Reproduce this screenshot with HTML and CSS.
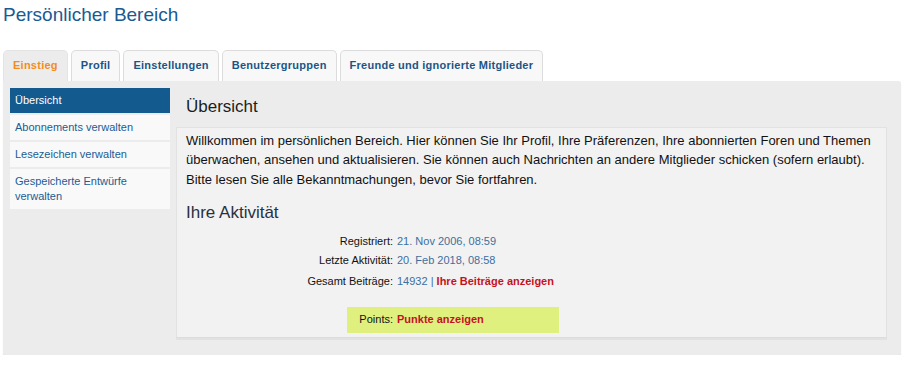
FILE: index.html
```html
<!DOCTYPE html>
<html lang="de">
<head>
<meta charset="utf-8">
<title>Persönlicher Bereich</title>
<link rel="stylesheet" href="styles.css">
</head>
<body>
<div class="page">
  <h1 class="title">Persönlicher Bereich</h1>
  <ul class="tabs">
    <li class="tab active">Einstieg</li>
    <li class="tab">Profil</li>
    <li class="tab">Einstellungen</li>
    <li class="tab">Benutzergruppen</li>
    <li class="tab">Freunde und ignorierte Mitglieder</li>
  </ul>
  <div class="panel">
    <ul class="menu">
      <li class="menu-item active">Übersicht</li>
      <li class="menu-item">Abonnements verwalten</li>
      <li class="menu-item">Lesezeichen verwalten</li>
      <li class="menu-item">Gespeicherte Entwürfe verwalten</li>
    </ul>
    <div class="main">
      <h2 class="main-title">Übersicht</h2>
      <div class="box">
        <p class="intro">Willkommen im persönlichen Bereich. Hier können Sie Ihr Profil, Ihre Präferenzen, Ihre abonnierten Foren und Themen überwachen, ansehen und aktualisieren. Sie können auch Nachrichten an andere Mitglieder schicken (sofern erlaubt). Bitte lesen Sie alle Bekanntmachungen, bevor Sie fortfahren.</p>
        <h3 class="sub-title">Ihre Aktivität</h3>
        <dl class="details">
          <dt>Registriert:</dt><dd class="val">21. Nov 2006, 08:59</dd>
          <dt>Letzte Aktivität:</dt><dd class="val">20. Feb 2018, 08:58</dd>
          <dt class="last">Gesamt Beiträge:</dt><dd class="val last">14932 <span class="sep">|</span> <span class="red">Ihre Beiträge anzeigen</span></dd>
        </dl>
        <dl class="points">
          <dt>Points:</dt><dd class="red">Punkte anzeigen</dd>
        </dl>
      </div>
    </div>
  </div>
</div>
</body>
</html>
```
FILE: styles.css
```css
* { box-sizing: border-box; }
html, body { margin: 0; padding: 0; background: #fff; }
body { font-family: "Liberation Sans", Arial, sans-serif; color: #000; }

.page { width: 898px; margin-left: 3px; }

.title {
  margin: 0;
  padding-top: 4px;
  font-size: 19px;
  line-height: 22px;
  font-weight: normal;
  color: #1a5a92;
  height: 50px;
}

.tabs {
  list-style: none;
  margin: 0;
  padding: 0;
  display: flex;
  gap: 3px;
}
.tab {
  font-size: 11px;
  font-weight: bold;
  line-height: 14px;
  letter-spacing: 0.25px;
  padding: 7px 9px 9px;
  border: 1px solid #dcdcdc;
  border-bottom: none;
  border-radius: 5px 5px 0 0;
  background: #f8f8f8;
  color: #1b5587;
}
.tab.active {
  background: #ececec;
  border-color: #e4e4e4;
  color: #f28c1c;
}

.panel {
  background: #ececec;
  display: flex;
  align-items: flex-start;
  gap: 6px;
  padding: 7px 14px 17px 7px;
  border-radius: 0 3px 3px 3px;
  box-shadow: 0 1px 1px #dedede;
}

.menu {
  list-style: none;
  margin: 0;
  padding: 0;
  width: 160px;
  flex: none;
  display: flex;
  flex-direction: column;
  gap: 2px;
}
.menu-item {
  background: #f9f9f9;
  font-size: 11px;
  line-height: 15px;
  padding: 5px 6px 5px 5px;
  color: #1b5c94;
}
.menu-item.active {
  background: #135a8f;
  color: #fff;
}

.main { flex: 1; }

.main-title {
  margin: 9px 0 10px;
  padding-left: 10px;
  font-size: 17px;
  line-height: 20px;
  font-weight: normal;
  color: #1d1d1d;
}

.box {
  background: #f2f2f2;
  border: 1px solid #e2e2e2;
  border-bottom-color: #dcdcdc;
  box-shadow: 0 2px 0 #e2e2e2;
  padding: 3px 9px 4px 9px;
}

.intro {
  margin: 0;
  font-size: 13px;
  line-height: 19.3px;
  color: #111;
}

.sub-title {
  margin: 14px 0 11px;
  font-size: 17px;
  line-height: 20px;
  font-weight: normal;
  color: #28313f;
}

.details {
  margin: 0;
  display: grid;
  grid-template-columns: 207px auto;
  column-gap: 4px;
  row-gap: 5.5px;
  font-size: 11px;
  line-height: 14px;
}
.details dt { text-align: right; color: #111; }
.details dd { margin: 0; }
.details .last { margin-top: 1.5px; }
.val { color: #3d6f9e; }
.sep { color: #3d6f9e; }
.red { color: #c5121e; font-weight: bold; }

.points {
  margin: 18.5px 0 0 161px;
  width: 212px;
  background: #dff07e;
  display: grid;
  grid-template-columns: 46px auto;
  column-gap: 4px;
  padding: 5px 0 7px;
  font-size: 11px;
  line-height: 14px;
}
.points dt { text-align: right; color: #111; }
.points dd { margin: 0; }
```
